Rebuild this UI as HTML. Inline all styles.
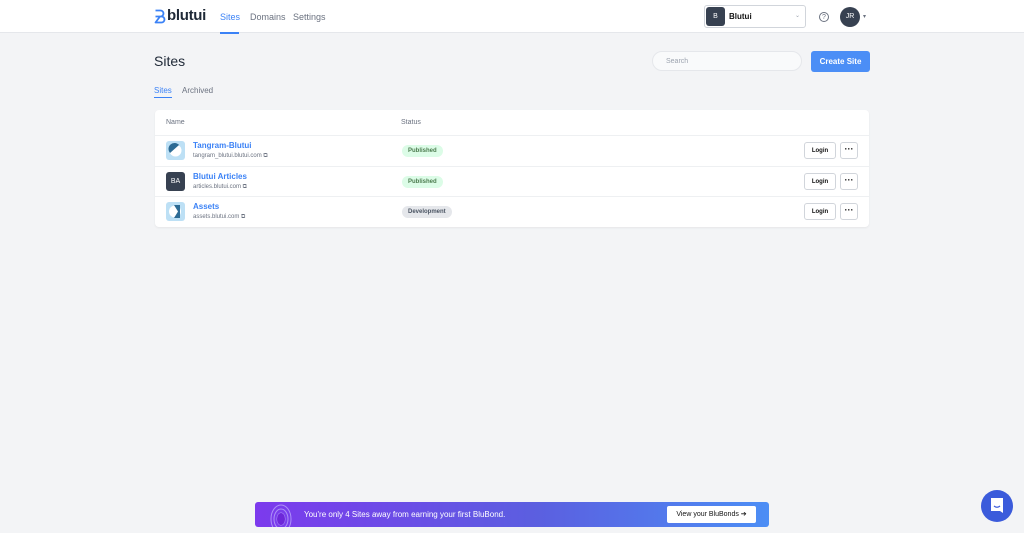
<!DOCTYPE html>
<html><head><style>
*{box-sizing:border-box;margin:0;padding:0}
body{width:1024px;height:533px;background:#f3f4f6;font-family:"Liberation Sans",sans-serif;position:relative;overflow:hidden;color:#374151}
.top{position:absolute;left:0;top:0;width:1024px;height:33px;background:#fff;border-bottom:1px solid #e5e7eb}
.abs{position:absolute}
.nav{font-size:9px;color:#6b7280;top:12px}
.card{position:absolute;left:155px;top:110px;width:714px;height:117px;background:#fff;border-radius:4px;box-shadow:0 1px 2px rgba(0,0,0,.06)}
.row{position:absolute;left:0;width:714px;height:30px;border-top:1px solid #eef0f2}
.ico{position:absolute;left:11px;top:5px;width:19px;height:19px;border-radius:3px}
.nm{position:absolute;left:38px;top:5px;font-size:8px;color:#3b82f6;font-weight:bold}
.url{position:absolute;left:38px;top:17px;font-size:6px;color:#6b7280}
.badge{position:absolute;left:247px;top:9px;height:12px;border-radius:6px;font-size:6px;font-weight:bold;padding:0 6px;display:flex;align-items:center}
.pub{background:#dcfce7;color:#4d7c4f}
.dev{background:#e5e7eb;color:#4b5563}
.btn{position:absolute;left:649px;top:6px;width:32px;height:17px;border:1px solid #d1d5db;border-radius:3px;font-size:6px;font-weight:bold;display:flex;align-items:center;justify-content:center;color:#111}
.dots{position:absolute;left:685px;top:6px;width:18px;height:17px;border:1px solid #d1d5db;border-radius:3px;font-size:9px;font-weight:bold;display:flex;align-items:center;justify-content:center;color:#111;padding-bottom:3px}
</style></head><body>
<div class="top"></div>
<svg class="abs" style="left:154px;top:9px" width="12" height="15" viewBox="0 0 12 15"><path d="M1.5 1.5h5a3 3 0 0 1 0 6h-5M2.5 7.5h5a3 3 0 0 1 0 6h-6L6 7.5z" fill="none" stroke="#3b82f6" stroke-width="1.8" stroke-linejoin="round"/></svg>
<div class="abs" style="left:167px;top:7px;font-size:15px;font-weight:bold;color:#1f2937;letter-spacing:-.3px">blutui</div>
<div class="abs nav" style="left:220px;color:#3b82f6">Sites</div>
<div class="abs" style="left:220px;top:32px;width:19px;height:2px;background:#3b82f6"></div>
<div class="abs nav" style="left:250px">Domains</div>
<div class="abs nav" style="left:293px">Settings</div>
<div class="abs" style="left:704px;top:5px;width:102px;height:23px;border:1px solid #d1d5db;border-radius:3px;background:#fff"></div>
<div class="abs" style="left:706px;top:7px;width:19px;height:19px;border-radius:3px;background:#374151;color:#fff;font-size:7px;text-align:center;line-height:19px">B</div>
<div class="abs" style="left:729px;top:12px;font-size:8px;font-weight:bold;color:#111">Blutui</div>
<div class="abs" style="left:795px;top:12px;font-size:6px;color:#9ca3af">⌄</div>
<div class="abs" style="left:819px;top:12px;width:10px;height:10px;border:1px solid #6b7280;border-radius:50%;font-size:7px;text-align:center;line-height:9px;color:#6b7280">?</div>
<div class="abs" style="left:840px;top:7px;width:20px;height:20px;border-radius:50%;background:#374151;color:#fff;font-size:7px;text-align:center;line-height:20px">JR</div>
<div class="abs" style="left:863px;top:13px;font-size:6px;color:#6b7280">▾</div>
<div class="abs" style="left:154px;top:53px;font-size:14px;color:#1f2937">Sites</div>
<div class="abs" style="left:652px;top:51px;width:150px;height:20px;border:1px solid #e5e7eb;border-radius:10px;background:#f9fafb;font-size:7px;color:#9ca3af;padding:0 13px;display:flex;align-items:center">Search</div>
<div class="abs" style="left:811px;top:51px;width:59px;height:21px;border-radius:3px;background:#4b8ef6;color:#fff;font-size:8px;font-weight:bold;text-align:center;line-height:21px">Create Site</div>
<div class="abs" style="left:154px;top:86px;font-size:8px;color:#3b82f6">Sites</div>
<div class="abs" style="left:154px;top:97px;width:18px;height:1px;background:#3b82f6"></div>
<div class="abs" style="left:182px;top:86px;font-size:8px;color:#6b7280">Archived</div>
<div class="card">
<div class="abs" style="left:11px;top:9px;font-size:7px;color:#6b7280">Name</div>
<div class="abs" style="left:246px;top:9px;font-size:7px;color:#6b7280">Status</div>
<div class="row" style="top:25px">
<div class="ico" style="background:#bde0f5"><svg width="19" height="19"><circle cx="9.5" cy="9.5" r="6" fill="#fff"/><path d="M4 12a6 6 0 0 1 9-8z" fill="#2d6b94"/></svg></div>
<div class="nm">Tangram-Blutui</div><div class="url">tangram_blutui.blutui.com ⧉</div>
<div class="badge pub">Published</div><div class="btn">Login</div><div class="dots">···</div></div>
<div class="row" style="top:56px">
<div class="ico" style="background:#374151;color:#fff;font-size:7px;text-align:center;line-height:19px">BA</div>
<div class="nm">Blutui Articles</div><div class="url">articles.blutui.com ⧉</div>
<div class="badge pub">Published</div><div class="btn">Login</div><div class="dots">···</div></div>
<div class="row" style="top:86px">
<div class="ico" style="background:#bde0f5"><svg width="19" height="19"><circle cx="9" cy="9.5" r="6" fill="#fff"/><path d="M8 3h6v13h-6l4-6.5z" fill="#2d6b94"/></svg></div>
<div class="nm">Assets</div><div class="url">assets.blutui.com ⧉</div>
<div class="badge dev">Development</div><div class="btn">Login</div><div class="dots">···</div></div>
</div>
<div class="abs" style="left:255px;top:502px;width:514px;height:25px;border-radius:3px;background:linear-gradient(90deg,#7c3aed,#5b5fe0 55%,#4c8ef5)"></div>
<svg class="abs" style="left:266px;top:502px" width="30" height="25"><g fill="none" stroke="#c4b5fd" stroke-width="1" opacity=".7"><ellipse cx="15" cy="17" rx="4" ry="6"/><ellipse cx="15" cy="17" rx="7" ry="10"/><ellipse cx="15" cy="17" rx="10" ry="14"/></g><ellipse cx="15" cy="17" rx="4" ry="6" fill="#6d28d9"/></svg>
<div class="abs" style="left:304px;top:510px;font-size:8px;color:#fff">You're only 4 Sites away from earning your first BluBond.</div>
<div class="abs" style="left:667px;top:506px;width:89px;height:17px;border-radius:2px;background:#fff;font-size:7px;color:#111;text-align:center;line-height:17px">View your BluBonds ➔</div>
<div class="abs" style="left:981px;top:490px;width:32px;height:32px;border-radius:50%;background:#3b5bdb"></div>
<svg class="abs" style="left:989px;top:497px" width="16" height="18"><path d="M2 1h12v15l-3-2H2z" fill="#fff"/><path d="M5 9q3 2.5 6 0" stroke="#3b5bdb" stroke-width="1.2" fill="none"/></svg>
</body></html>
